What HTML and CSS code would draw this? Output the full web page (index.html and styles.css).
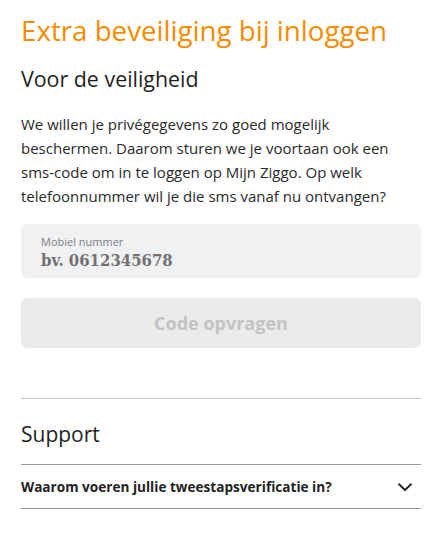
FILE: index.html
```html
<!DOCTYPE html>
<html lang="nl">
<head>
<meta charset="utf-8">
<title>Extra beveiliging bij inloggen</title>
<link rel="stylesheet" href="styles.css">
</head>
<body>
<main class="page">
  <h1 class="title">Extra beveiliging bij inloggen</h1>
  <h2 class="subtitle">Voor de veiligheid</h2>
  <p class="intro">We willen je privégegevens zo goed mogelijk beschermen. Daarom sturen we je voortaan ook een sms-code om in te loggen op Mijn Ziggo. Op welk telefoonnummer wil je die sms vanaf nu ontvangen?</p>
  <label class="field">
    <span class="field-label">Mobiel nummer</span>
    <input class="field-input" type="tel" placeholder="bv. 0612345678">
  </label>
  <button class="btn" type="button" disabled>Code opvragen</button>
  <section class="support">
    <h2 class="support-title">Support</h2>
    <div class="faq">
      <span class="faq-q">Waarom voeren jullie tweestapsverificatie in?</span>
      <svg class="chev" width="16" height="10" viewBox="0 0 16 10" aria-hidden="true"><path d="M1.5 1.8 L8 8 L14.5 1.8" fill="none" stroke="#2b2b2b" stroke-width="2"/></svg>
    </div>
  </section>
</main>
</body>
</html>
```
FILE: styles.css
```css
* { box-sizing: border-box; }
html, body { margin: 0; padding: 0; background: #fff; }
body { font-family: "Open Sans", "Noto Sans", sans-serif; color: #222; }
.page { padding: 12px 19px 0 21px; display: flex; flex-direction: column; }
.title { margin: 0; font-size: 27.7px; line-height: 36px; font-weight: 400; color: #f48c00; }
.subtitle { margin: 17px 0 0; font-size: 21.4px; line-height: 28px; font-weight: 500; color: #1f1f1f; }
.intro { margin: 19px 0 0; font-size: 15px; line-height: 24px; color: #2a2a2a; }
.field { margin-top: 16px; display: flex; flex-direction: column; background: #f0f1f3; border-radius: 6px; padding: 11px 20px 7px; height: 54px; }
.field-label { font-size: 11px; line-height: 14px; color: #7b7f84; }
.field-input { border: 0; outline: 0; background: transparent; padding: 0; margin: 0; font-family: "DejaVu Serif Condensed", "DejaVu Serif", serif; font-stretch: condensed; font-weight: 700; font-size: 16.6px; line-height: 22px; height: 22px; color: #707070; }
.field-input::placeholder { color: #727272; opacity: 1; }
.btn { margin-top: 20px; height: 50px; border: 0; border-radius: 6px; background: #ebebeb; color: #c3c3c3; font-family: "Open Sans", sans-serif; font-weight: 700; font-size: 18px; }
.support { margin-top: 50px; border-top: 1px solid #c5c8cc; }
.support-title { margin: 0; padding-top: 21px; font-size: 21px; line-height: 28px; font-weight: 500; color: #1f1f1f; height: 65px; }
.faq { display: flex; align-items: center; justify-content: space-between; height: 45px; border-top: 1px solid #9a9a9a; border-bottom: 1px solid #9a9a9a; padding-right: 8px; }
.faq-q { font-size: 13.6px; font-weight: 700; color: #222; }
.chev { display: block; }
```
